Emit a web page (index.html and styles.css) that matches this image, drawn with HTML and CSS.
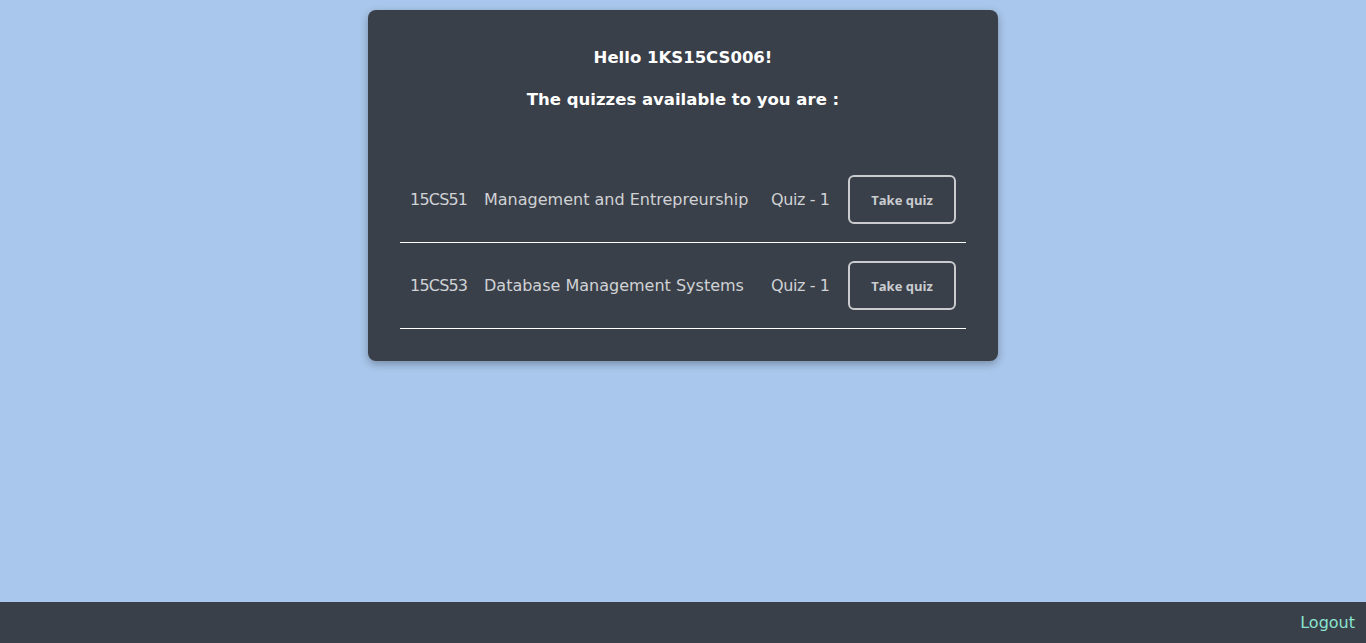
FILE: index.html
```html
<!DOCTYPE html>
<html>
<head>
<meta charset="utf-8">
<title>Quizzes</title>
<link rel="stylesheet" href="styles.css">
</head>
<body>
<main class="page">
  <section class="card">
    <h3 class="title">Hello 1KS15CS006!</h3>
    <h3 class="subtitle">The quizzes available to you are :</h3>
    <div class="quiz-list">
      <div class="quiz-row">
        <span class="cell code">15CS51</span>
        <span class="cell name">Management and Entrepreurship</span>
        <span class="cell quiz">Quiz - 1</span>
        <span class="cell action"><button class="take-btn">Take quiz</button></span>
      </div>
      <div class="quiz-row">
        <span class="cell code">15CS53</span>
        <span class="cell name">Database Management Systems</span>
        <span class="cell quiz">Quiz - 1</span>
        <span class="cell action"><button class="take-btn">Take quiz</button></span>
      </div>
    </div>
  </section>
</main>
<footer class="footer">
  <a class="logout" href="#">Logout</a>
</footer>
</body>
</html>
```

FILE: styles.css
```css
html, body {
  margin: 0;
  height: 100%;
}
body {
  background: #a9c7ec;
  font-family: "DejaVu Sans", "Open Sans", sans-serif;
  display: flex;
  flex-direction: column;
}
.page {
  flex: 1;
  display: flex;
  justify-content: center;
  align-items: flex-start;
  padding-top: 10px;
}
.card {
  width: 566px;
  background: #3a4049;
  border-radius: 8px;
  padding: 32px 32px 32px;
  box-shadow: 0 3px 8px rgba(0, 0, 0, 0.3);
}
.title, .subtitle {
  margin: 0;
  color: #ffffff;
  text-align: center;
  font-size: 16.5px;
  font-weight: bold;
  line-height: 30px;
}
.title {
  padding-top: 1px;
}
.subtitle {
  margin-top: 12px;
  margin-bottom: 42px;
}
.quiz-row {
  display: grid;
  grid-template-columns: 74px 287px 77px 128px;
  align-items: center;
  border-bottom: 1px solid #ffffff;
  height: 85px;
}
.cell {
  padding: 0 10px;
  color: #d0d2d5;
  font-size: 16px;
  white-space: nowrap;
}
.code {
  letter-spacing: -0.8px;
}
.quiz {
  letter-spacing: -0.4px;
}
.take-btn {
  width: 108px;
  height: 49px;
  background: transparent;
  border: 2px solid #c9cbce;
  border-radius: 6px;
  color: #c9ccd0;
  font-family: "Open Sans", sans-serif;
  font-weight: bold;
  font-size: 13px;
  cursor: pointer;
}
.footer {
  height: 41px;
  background: #3a4049;
  display: flex;
  justify-content: flex-end;
  align-items: center;
  padding: 0 11px;
}
.logout {
  color: #8ae3cf;
  text-decoration: none;
  font-size: 16px;
}
```
